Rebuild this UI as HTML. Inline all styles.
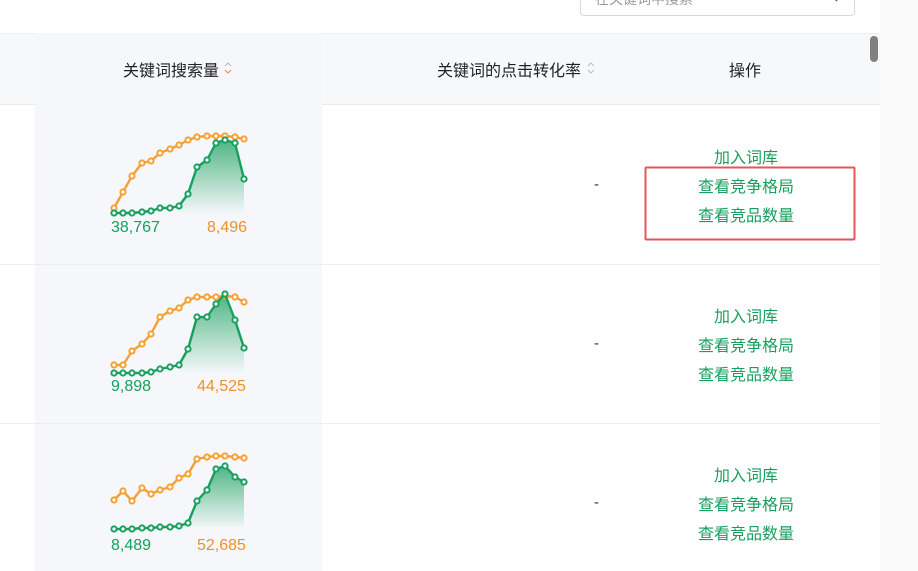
<!DOCTYPE html>
<html><head><meta charset="utf-8"><style>
*{margin:0;padding:0;box-sizing:border-box}
body{width:918px;height:571px;overflow:hidden;background:#fff;font-family:"Liberation Sans","Noto Sans CJK SC",sans-serif;position:relative}
.a{position:absolute}
.hdr{left:0;top:33px;width:880px;height:72px;background:#f7f8fa;border-top:1px solid #eceef2;border-bottom:1px solid #e8eaee}
.col{left:35px;top:33px;width:287px;height:538px;background:#f5f7fa}
.line{left:0;width:880px;height:1px;background:#ebedf0}
.h{font-size:16px;color:#222;top:57px}
.lk{font-size:16px;color:#17a05d;width:200px;text-align:center;left:646px}
.n{font-size:16px}
.g{color:#17a05d}.o{color:#f0902a}
</style></head><body>
<div class="a" style="left:880px;top:0;width:38px;height:571px;background:#fafafa"></div>
<div class="a" style="left:580px;top:-8px;width:275px;height:24px;border:1px solid #d9d9d9;border-radius:4px;background:#fff;overflow:hidden">
<span class="a" style="left:14px;top:-4px;font-size:14px;color:#999">在关键词中搜索</span>
<svg class="a" style="left:240px;top:-2px" width="20" height="16"><circle cx="8" cy="2" r="6" fill="none" stroke="#555" stroke-width="1.5"/><line x1="12" y1="6" x2="16" y2="10" stroke="#555" stroke-width="1.5"/></svg>
</div>
<div class="a hdr"></div>
<div class="a col"></div>
<div class="a" style="left:870px;top:36px;width:8px;height:26px;border-radius:4px;background:#808080"></div>
<span class="a h" style="left:123px">关键词搜索量</span>
<svg class="a" style="left:222px;top:60px" width="12" height="16"><path d="M3 6 L6 3 L9 6" fill="none" stroke="#bbb" stroke-width="1"/><path d="M3 10 L6 13 L9 10" fill="none" stroke="#f0902a" stroke-width="1"/></svg>
<span class="a h" style="left:437px">关键词的点击转化率</span>
<svg class="a" style="left:585px;top:60px" width="12" height="16"><path d="M3 6 L6 3 L9 6" fill="none" stroke="#bbb" stroke-width="1"/><path d="M3 10 L6 13 L9 10" fill="none" stroke="#bbb" stroke-width="1"/></svg>
<span class="a h" style="left:729px">操作</span>
<div class="a line" style="top:264px"></div>
<div class="a line" style="top:423px"></div>

<svg class="a" style="left:0;top:0" width="918" height="571">
<defs>
<linearGradient id="gr" x1="0" y1="0" x2="0" y2="1"><stop offset="0" stop-color="#17a05d" stop-opacity=".75"/><stop offset="1" stop-color="#17a05d" stop-opacity="0"/></linearGradient>
<marker id="mo" markerWidth="10" markerHeight="10" refX="5" refY="5" markerUnits="userSpaceOnUse"><circle cx="5" cy="5" r="2.6" fill="#fff" stroke="#f5a030" stroke-width="2"/></marker>
<marker id="mg" markerWidth="10" markerHeight="10" refX="5" refY="5" markerUnits="userSpaceOnUse"><circle cx="5" cy="5" r="2.6" fill="#fff" stroke="#17a05d" stroke-width="2"/></marker>
</defs>
<g fill="none" stroke-width="2.4" stroke-linejoin="round">
<polygon fill="url(#gr)" stroke="none" points="179,206 188,194 197,167 207,160 216,143 225,140 235,143 244,179 244,214 179,214"/>
<polyline stroke="#f5a030" marker-start="url(#mo)" marker-mid="url(#mo)" marker-end="url(#mo)" points="114,208 123,192 132,176 142,163 151,161 160,153 170,149 179,145 188,140 197,137 207,136 216,136 225,136 235,137 244,139"/>
<polyline stroke="#17a05d" marker-start="url(#mg)" marker-mid="url(#mg)" marker-end="url(#mg)" points="114,213 123,213 132,213 142,212 151,211 160,208 170,208 179,206 188,194 197,167 207,160 216,143 225,140 235,143 244,179"/>

<polygon fill="url(#gr)" stroke="none" points="179,365 188,349 197,317 207,317 216,304 225,294 235,320 244,348 244,373 179,373"/>
<polyline stroke="#f5a030" marker-start="url(#mo)" marker-mid="url(#mo)" marker-end="url(#mo)" points="114,365 123,365 132,351 142,344 151,334 160,317 170,311 179,308 188,300 197,297 207,297 216,297 225,296 235,297 244,302"/>
<polyline stroke="#17a05d" marker-start="url(#mg)" marker-mid="url(#mg)" marker-end="url(#mg)" points="114,373 123,373 132,373 142,373 151,372 160,369 170,367 179,365 188,349 197,317 207,317 216,304 225,294 235,320 244,348"/>

<polygon fill="url(#gr)" stroke="none" points="179,526 188,523 197,501 207,490 216,469 225,466 235,477 244,482 244,529 179,529"/>
<polyline stroke="#f5a030" marker-start="url(#mo)" marker-mid="url(#mo)" marker-end="url(#mo)" points="114,500 123,491 132,501 142,488 151,494 160,490 170,487 179,478 188,474 197,459 207,457 216,456 225,456 235,457 244,458"/>
<polyline stroke="#17a05d" marker-start="url(#mg)" marker-mid="url(#mg)" marker-end="url(#mg)" points="114,529 123,529 132,529 142,528 151,528 160,527 170,527 179,526 188,523 197,501 207,490 216,469 225,466 235,477 244,482"/>
</g>
<rect x="645.5" y="167.5" width="209" height="72" fill="none" stroke="#e8545a" stroke-width="2" rx="1"/>
</svg>

<span class="a n g" style="left:111px;top:219px">38,767</span><span class="a n o" style="left:207px;top:219px">8,496</span>
<span class="a n g" style="left:111px;top:378px">9,898</span><span class="a n o" style="left:197px;top:378px">44,525</span>
<span class="a n g" style="left:111px;top:537px">8,489</span><span class="a n o" style="left:197px;top:537px">52,685</span>

<span class="a" style="left:594px;top:176px;font-size:15px;color:#333">-</span>
<span class="a" style="left:594px;top:335px;font-size:15px;color:#333">-</span>
<span class="a" style="left:594px;top:494px;font-size:15px;color:#333">-</span>

<div class="a lk" style="top:144px">加入词库</div><div class="a lk" style="top:173px">查看竞争格局</div><div class="a lk" style="top:202px">查看竞品数量</div>
<div class="a lk" style="top:303px">加入词库</div><div class="a lk" style="top:332px">查看竞争格局</div><div class="a lk" style="top:361px">查看竞品数量</div>
<div class="a lk" style="top:462px">加入词库</div><div class="a lk" style="top:491px">查看竞争格局</div><div class="a lk" style="top:520px">查看竞品数量</div>
</body></html>
